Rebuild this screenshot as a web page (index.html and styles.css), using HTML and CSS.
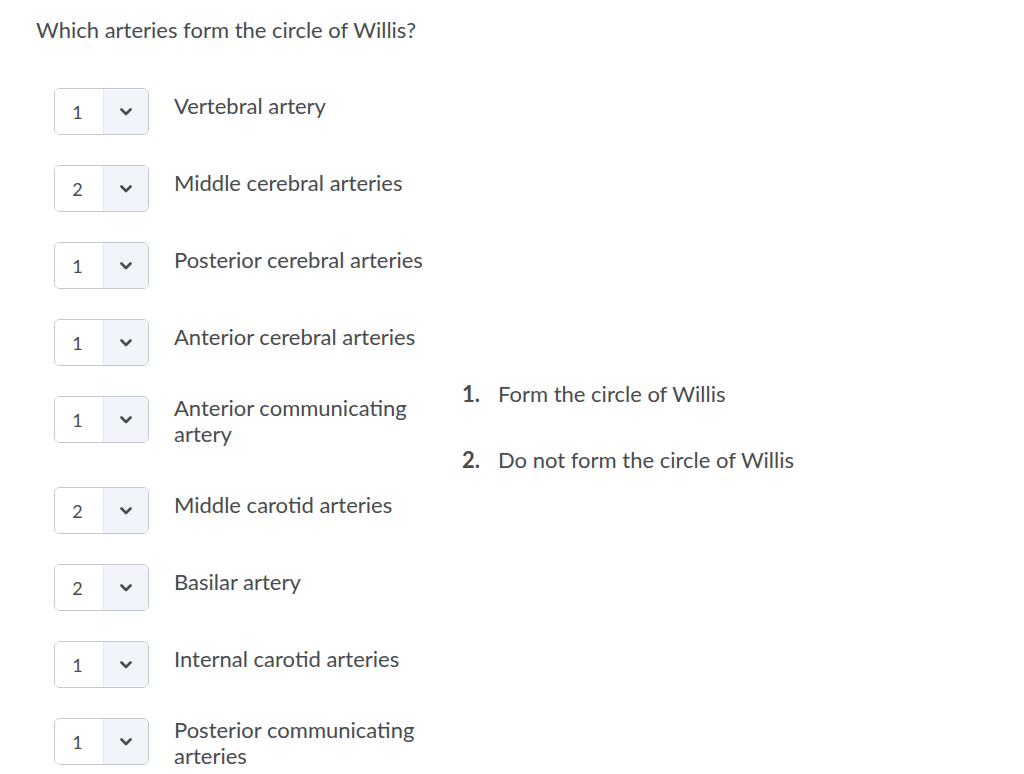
FILE: index.html
```html
<!DOCTYPE html>
<html>
<head>
<meta charset="utf-8">
<link rel="stylesheet" href="styles.css">
</head>
<body>
<div class="question">
  <h1 class="prompt">Which arteries form the circle of Willis?</h1>
  <div class="matching">
    <div class="items">
      <div class="row"><div class="select"><span class="val">1</span><span class="arrow"><svg width="12" height="8" viewBox="0 0 12 8"><path d="M1.5 1.5 L6 6 L10.5 1.5" fill="none" stroke="#494c4e" stroke-width="2.6" stroke-linecap="round" stroke-linejoin="round"/></svg></span></div><div class="label">Vertebral artery</div></div>
      <div class="row"><div class="select"><span class="val">2</span><span class="arrow"><svg width="12" height="8" viewBox="0 0 12 8"><path d="M1.5 1.5 L6 6 L10.5 1.5" fill="none" stroke="#494c4e" stroke-width="2.6" stroke-linecap="round" stroke-linejoin="round"/></svg></span></div><div class="label">Middle cerebral arteries</div></div>
      <div class="row"><div class="select"><span class="val">1</span><span class="arrow"><svg width="12" height="8" viewBox="0 0 12 8"><path d="M1.5 1.5 L6 6 L10.5 1.5" fill="none" stroke="#494c4e" stroke-width="2.6" stroke-linecap="round" stroke-linejoin="round"/></svg></span></div><div class="label">Posterior cerebral arteries</div></div>
      <div class="row"><div class="select"><span class="val">1</span><span class="arrow"><svg width="12" height="8" viewBox="0 0 12 8"><path d="M1.5 1.5 L6 6 L10.5 1.5" fill="none" stroke="#494c4e" stroke-width="2.6" stroke-linecap="round" stroke-linejoin="round"/></svg></span></div><div class="label">Anterior cerebral arteries</div></div>
      <div class="row multi"><div class="select"><span class="val">1</span><span class="arrow"><svg width="12" height="8" viewBox="0 0 12 8"><path d="M1.5 1.5 L6 6 L10.5 1.5" fill="none" stroke="#494c4e" stroke-width="2.6" stroke-linecap="round" stroke-linejoin="round"/></svg></span></div><div class="label">Anterior communicating<br>artery</div></div>
      <div class="row"><div class="select"><span class="val">2</span><span class="arrow"><svg width="12" height="8" viewBox="0 0 12 8"><path d="M1.5 1.5 L6 6 L10.5 1.5" fill="none" stroke="#494c4e" stroke-width="2.6" stroke-linecap="round" stroke-linejoin="round"/></svg></span></div><div class="label">Middle carotid arteries</div></div>
      <div class="row"><div class="select"><span class="val">2</span><span class="arrow"><svg width="12" height="8" viewBox="0 0 12 8"><path d="M1.5 1.5 L6 6 L10.5 1.5" fill="none" stroke="#494c4e" stroke-width="2.6" stroke-linecap="round" stroke-linejoin="round"/></svg></span></div><div class="label">Basilar artery</div></div>
      <div class="row"><div class="select"><span class="val">1</span><span class="arrow"><svg width="12" height="8" viewBox="0 0 12 8"><path d="M1.5 1.5 L6 6 L10.5 1.5" fill="none" stroke="#494c4e" stroke-width="2.6" stroke-linecap="round" stroke-linejoin="round"/></svg></span></div><div class="label">Internal carotid arteries</div></div>
      <div class="row multi"><div class="select"><span class="val">1</span><span class="arrow"><svg width="12" height="8" viewBox="0 0 12 8"><path d="M1.5 1.5 L6 6 L10.5 1.5" fill="none" stroke="#494c4e" stroke-width="2.6" stroke-linecap="round" stroke-linejoin="round"/></svg></span></div><div class="label">Posterior communicating<br>arteries</div></div>
    </div>
    <ol class="choices">
      <li><span class="num">1.</span><span class="ctext">Form the circle of Willis</span></li>
      <li><span class="num">2.</span><span class="ctext">Do not form the circle of Willis</span></li>
    </ol>
  </div>
</div>
</body>
</html>
```

FILE: styles.css
```css
html, body {
  margin: 0;
  padding: 0;
  background: #ffffff;
}
body {
  font-family: Lato, "Open Sans", sans-serif;
  color: #494c4e;
}
.question {
  padding: 17px 0 0 36px;
}
.prompt {
  margin: 0;
  font-size: 22px;
  font-weight: 400;
  line-height: 26px;
}
.matching {
  display: flex;
  align-items: flex-start;
  margin-top: 45px;
}
.items {
  display: flex;
  flex-direction: column;
  gap: 30px;
  padding-left: 18px;
  width: 408px;
}
.row {
  display: flex;
  align-items: flex-start;
}
.row.multi {
  min-height: 61px;
}
.select {
  display: flex;
  width: 93px;
  height: 45px;
  border: 1px solid #c3c9cf;
  border-radius: 6px;
  overflow: hidden;
  flex-shrink: 0;
}
.val {
  width: 45px;
  padding-right: 3px;
  display: flex;
  align-items: center;
  justify-content: center;
  font-size: 18px;
  border-right: 1px solid #e3e8ee;
  background: #fff;
}
.arrow {
  flex: 1;
  display: flex;
  align-items: center;
  justify-content: center;
  background: #f1f5fb;
}
.label {
  margin-left: 25px;
  padding-top: 5px;
  font-size: 22px;
  line-height: 26px;
}
.row.multi .label {
  padding-top: 0;
  margin-top: -1px;
}
.choices {
  list-style: none;
  margin: 293px 0 0 0;
  padding: 0;
  display: flex;
  flex-direction: column;
  gap: 40px;
}
.choices li {
  display: flex;
  align-items: baseline;
  font-size: 22px;
  line-height: 26px;
}
.num {
  font-weight: 700;
  width: 36px;
}
```
